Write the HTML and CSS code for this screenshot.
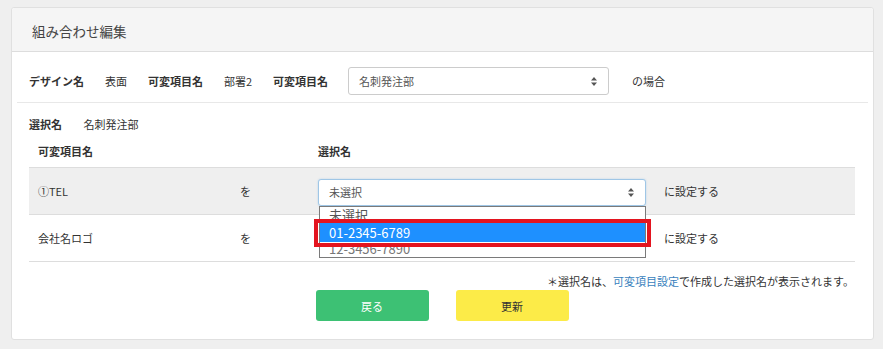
FILE: index.html
```html
<!DOCTYPE html>
<html lang="ja">
<head>
    <meta charset="UTF-8">
    <meta name="viewport" content="width=device-width, initial-scale=1.0">
    <title>組み合わせ編集</title>
    <link rel="stylesheet" href="styles.css">
</head>
<body>

    <!-- パネル -->
    <div class="panel">
        <div class="panel-heading">組み合わせ編集</div>

        <div class="panel-body">
            <!-- 条件 -->
            <div class="filter-row">
                <span class="label">デザイン名</span>
                <span class="value">表面</span>
                <span class="label">可変項目名</span>
                <span class="value">部署2</span>
                <span class="label">可変項目名</span>
                <div class="select select-filter">
                    <span>名刺発注部</span>
                    <svg class="arrows" width="6" height="9" viewBox="0 0 6 9"><path d="M3 0L6 3.5H0Z M3 9L0 5.5H6Z" fill="#555"/></svg>
                </div>
                <span class="value">の場合</span>
            </div>

            <div class="selected-name">
                <span class="label">選択名</span>
                <span class="value">名刺発注部</span>
            </div>

            <!-- 組み合わせ表 -->
            <table class="combo-table">
                <thead>
                    <tr>
                        <th class="col-name">可変項目名</th>
                        <th class="col-wo"></th>
                        <th class="col-select">選択名</th>
                        <th></th>
                    </tr>
                </thead>
                <tbody>
                    <tr class="active">
                        <td>①TEL</td>
                        <td>を</td>
                        <td>
                            <div class="select-wrap">
                                <div class="select select-row focus">
                                    <span>未選択</span>
                                    <svg class="arrows" width="6" height="9" viewBox="0 0 6 9"><path d="M3 0L6 3.5H0Z M3 9L0 5.5H6Z" fill="#555"/></svg>
                                </div>
                                <div class="dropdown">
                                    <div class="option first">未選択</div>
                                    <div class="option selected">01-2345-6789</div>
                                    <div class="option last">12-3456-7890</div>
                                </div>
                                <div class="highlight-box"></div>
                            </div>
                        </td>
                        <td>に設定する</td>
                    </tr>
                    <tr>
                        <td>会社名ロゴ</td>
                        <td>を</td>
                        <td></td>
                        <td>に設定する</td>
                    </tr>
                </tbody>
            </table>

            <p class="note">＊選択名は、<a href="#">可変項目設定</a>で作成した選択名が表示されます。</p>

            <div class="buttons">
                <button class="btn btn-back">戻る</button>
                <button class="btn btn-update">更新</button>
            </div>
        </div>
    </div>

</body>
</html>
```

FILE: styles.css
```css
body {
    margin: 0;
    padding: 7px 9px 9px 11px;
    background-color: #efefef;
    font-family: "Noto Sans CJK JP", "Noto Sans", sans-serif;
    font-size: 11px;
    color: #333;
}

/* パネル */
.panel {
    background-color: #fff;
    border: 1px solid #e0e0e0;
    border-radius: 3px;
    box-sizing: border-box;
    height: 333px;
}
.panel-heading {
    background-color: #f5f5f5;
    border-bottom: 1px solid #dddddd;
    height: 43px;
    line-height: 46px;
    padding-left: 20px;
    font-size: 13.5px;
    color: #444;
    border-radius: 3px 3px 0 0;
}
.panel-body {
    padding: 0 5px 0 5px;
}

/* 条件 */
.filter-row {
    display: flex;
    align-items: center;
    padding: 15px 12px 7px 12px;
    border-bottom: 1px solid #e8e8e8;
}
.label {
    font-weight: bold;
    margin-right: 21px;
}
.value {
    margin-right: 21px;
}
.select {
    display: flex;
    align-items: center;
    justify-content: space-between;
    box-sizing: border-box;
    border: 1px solid #cccccc;
    border-radius: 3px;
    background-color: #fff;
    padding: 0 11px 0 10px;
    color: #555;
}
.select-filter {
    width: 261px;
    height: 28px;
    margin-right: 23px;
    margin-left: -1px;
}
.select-row {
    width: 328px;
    height: 27px;
}
.select.focus {
    border-color: #9fc6e6;
    box-shadow: 0 0 2px rgba(102, 175, 233, 0.4);
}
.arrows {
    display: block;
}

.selected-name {
    margin: 13px 0 0 12px;
    line-height: 16px;
}
.selected-name .value {
    margin-left: -2px;
}

/* 組み合わせ表 */
.combo-table {
    width: 826px;
    margin: 5px 0 0 12px;
    border-collapse: collapse;
}
.combo-table th {
    text-align: left;
    font-weight: bold;
    padding: 6px 9px 8px 9px;
    line-height: 16px;
}
.combo-table td {
    height: 46px;
    padding: 0 9px;
    border-top: 1px solid #dddddd;
    vertical-align: middle;
}
.combo-table tbody tr:last-child td {
    border-bottom: 1px solid #dddddd;
}
.combo-table tr.active td {
    background-color: #efefef;
}
.col-name {
    width: 184px;
}
.col-wo {
    width: 60px;
}
.col-select {
    width: 328px;
}

/* プルダウン */
.select-wrap {
    position: relative;
    margin-top: 2px;
}
.dropdown {
    position: absolute;
    top: 27px;
    left: 1px;
    right: 0;
    height: 50px;
    border: 1px solid #7a7a7a;
    background-color: #fff;
    z-index: 2;
    overflow: hidden;
}
.option {
    height: 19px;
    line-height: 19px;
    padding-left: 9px;
    font-size: 13px;
    color: #555;
    overflow: hidden;
}
.option.first {
    height: 16px;
    line-height: 15px;
}
.option.selected {
    background-color: #1e90ff;
    color: #fff;
}
.option.last {
    line-height: 13px;
    color: #777;
}
.highlight-box {
    position: absolute;
    top: 40px;
    left: -4px;
    width: 337px;
    height: 28px;
    box-sizing: border-box;
    border: 4px solid #e3141f;
    z-index: 3;
}

.note {
    text-align: right;
    margin: 11px 14px 0 0;
    line-height: 16px;
}
.note a {
    color: #3a7fbd;
    text-decoration: none;
}

.buttons {
    display: flex;
    justify-content: center;
    gap: 27px;
    margin-top: 1px;
    padding-right: 1px;
}
.btn {
    width: 113px;
    height: 31px;
    border: none;
    border-radius: 3px;
    font-family: inherit;
    font-size: 11px;
    cursor: pointer;
}
.btn-back {
    background-color: #3dc174;
    color: #fff;
}
.btn-update {
    background-color: #fceb48;
    color: #333;
}
```
